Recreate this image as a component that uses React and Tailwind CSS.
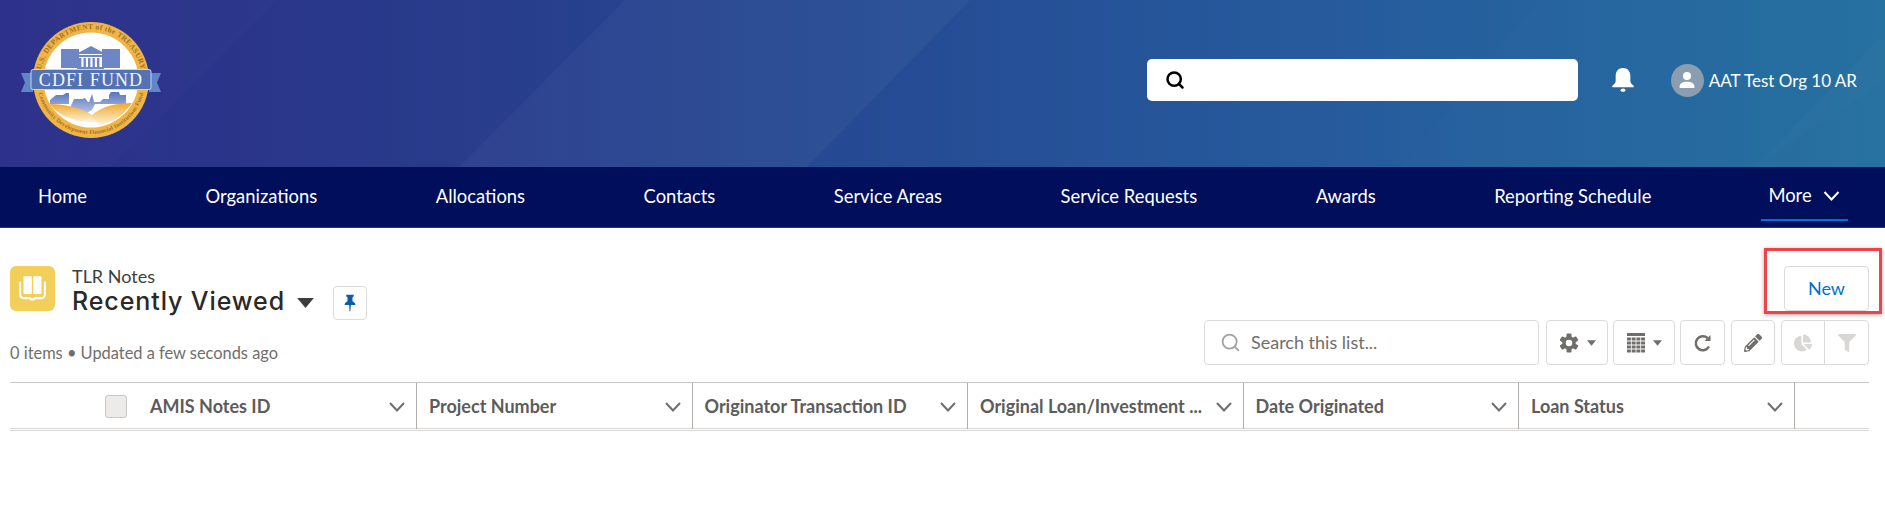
import { Search } from "lucide-react";
import { FaPencilAlt, FaChartPie, FaFilter } from "react-icons/fa";

const navItems = [
  "Home",
  "Organizations",
  "Allocations",
  "Contacts",
  "Service Areas",
  "Service Requests",
  "Awards",
  "Reporting Schedule",
];

const columns = [
  "Project Number",
  "Originator Transaction ID",
  "Original Loan/Investment ...",
  "Date Originated",
  "Loan Status",
];

const Chevron = ({ className }) => (
  <svg viewBox="0 0 16 10" className={className} fill="none" stroke="currentColor" strokeWidth="2">
    <polyline points="1,1 8,8.5 15,1" />
  </svg>
);

const Caret = ({ className }) => (
  <svg viewBox="0 0 10 6" className={className} fill="currentColor">
    <polygon points="0,0 10,0 5,6" />
  </svg>
);

const Logo = () => (
  <svg viewBox="20 21 142 118" className="w-[142px] h-[118px] shrink-0">
    <defs>
      <path id="ringTop" d="M40 80a51 51 0 0 1 102 0" />
      <path id="ringBottom" d="M37 80a54 54 0 0 0 108 0" />
      <linearGradient id="hillL" x1="0" y1="0" x2="0" y2="1">
        <stop offset="0" stopColor="#efa92c" />
        <stop offset="1" stopColor="#fdf4dd" />
      </linearGradient>
      <linearGradient id="city" x1="0" y1="0" x2="0" y2="1">
        <stop offset="0" stopColor="#5a76bb" />
        <stop offset="1" stopColor="#c5d0e8" />
      </linearGradient>
    </defs>
    <circle cx="91" cy="80" r="58" fill="#f0b545" />
    <circle cx="91" cy="80" r="47.5" fill="#ffffff" />
    <text fill="#a0702a" fontSize="7.4" fontWeight="700" fontFamily="'Liberation Serif', serif" letterSpacing="0.35">
      <textPath href="#ringTop" startOffset="50%" textAnchor="middle">U.S. DEPARTMENT of the TREASURY</textPath>
    </text>
    <text fill="#a0702a" fontSize="5.8" fontWeight="700" fontFamily="'Liberation Serif', serif" letterSpacing="0.2">
      <textPath href="#ringBottom" startOffset="50%" textAnchor="middle">Community Development Financial Institutions Fund</textPath>
    </text>
    {/* treasury building */}
    <g fill="#6e87c4">
      <rect x="61" y="49" width="18" height="19" />
      <rect x="102" y="49" width="18" height="19" />
      <polygon points="76,54 91,46 106,54" />
      <rect x="78" y="55" width="25" height="2" />
      <rect x="79" y="58" width="2.4" height="9" />
      <rect x="83.5" y="58" width="2.4" height="9" />
      <rect x="88" y="58" width="2.4" height="9" />
      <rect x="92.5" y="58" width="2.4" height="9" />
      <rect x="97" y="58" width="2.4" height="9" />
      <rect x="77" y="67" width="27" height="2" />
    </g>
    {/* skyline */}
    <path
      d="M50 100l6-5h7l3-2h3v11H50zM70 108l4-9h8l3-1 3 4h1l3-8 2 8h6l3-3h6v-4l2-3h8l1 3h6v9h-31l-3 6-12 7-10-3z"
      fill="url(#city)"
    />
    <path d="M50 104c15 0 32 4 42 11 3 2 5 4 7 7-12 1-30-1-41-10-4-3-6-5-8-8z" fill="url(#hillL)" />
    <path d="M132 103c-15 0-31 3-41 13l9 9c12-2 23-9 32-22z" fill="url(#hillL)" />
    {/* ribbon */}
    <polygon points="21,73 33,73 33,92 21,92 25,82.5" fill="#5f86c9" />
    <polygon points="161,73 149,73 149,92 161,92 157,82.5" fill="#5f86c9" />
    <rect x="31" y="69.5" width="120" height="20" rx="2" fill="#5272b4" stroke="#c6d3ec" strokeWidth="1" />
    <text x="91" y="85.5" textAnchor="middle" fill="#f4f6fb" fontSize="18" fontFamily="'Liberation Serif', serif" letterSpacing="1.1">
      CDFI FUND
    </text>
  </svg>
);

const HeaderBands = () => (
  <svg className="absolute inset-0 w-full h-full" viewBox="0 0 1885 167" preserveAspectRatio="none">
    <polygon points="0,0 277,0 110,167 0,167" fill="#ffffff" fillOpacity="0.012" />
    <polygon points="625,0 970,0 807,167 459,167" fill="#ffffff" fillOpacity="0.035" />
    <polygon points="1540,0 1885,0 1885,80 1755,167 1400,167" fill="#ffffff" fillOpacity="0.012" />
    <polygon points="1878,40 1885,40 1885,167 1755,167" fill="#ffffff" fillOpacity="0.02" />
  </svg>
);

const GearIcon = () => (
  <svg viewBox="0 0 20 20" className="w-[20px] h-[20px]" fill="currentColor">
    {[0, 60, 120, 180, 240, 300].map((deg) => (
      <rect key={deg} x="7.500" y="0.500" width="5" height="5" rx="1" transform={"rotate(" + deg + " 10 10)"} />
    ))}
    <circle cx="10" cy="10" r="5" fill="none" stroke="currentColor" strokeWidth="3.500" />
  </svg>
);

const ToolButton = ({ className = "", children }) => (
  <button className={"h-[45px] flex items-center justify-center gap-[8px] border border-[#dddbda] rounded-[4px] bg-white text-[#706e6b] " + className}>
    {children}
  </button>
);

export default function App() {
  return (
    <div className="w-[1885px] h-[521px] overflow-hidden bg-white font-['Lato','Liberation_Sans',sans-serif]">
      <header className="relative h-[167px] flex bg-[linear-gradient(90deg,#2c2f8a_0%,#29398a_20%,#254a93_45%,#265a9d_70%,#23709f_100%)]">
        <HeaderBands />
        <div className="relative ml-[20px] mt-[21px]">
          <Logo />
        </div>
        <div className="relative ml-auto mt-[59px] h-[42px] pr-[28px] flex items-center text-white">
          <div className="w-[431px] h-[42px] bg-white rounded-[5px] flex items-center pl-[18px]">
            <Search size={20} strokeWidth={3} className="text-black" />
          </div>
          <svg viewBox="0 0 24 24" className="ml-[29px] w-[32px] h-[32px]" fill="currentColor">
            <path d="M12 3c-3.5 0-5.5 2.6-5.5 6v3.5c0 1.6-1 2.6-2.3 3.6-.6.5-.3 1.4.5 1.4h14.6c.8 0 1.1-.9.5-1.4-1.3-1-2.3-2-2.3-3.6V9c0-3.4-2-6-5.5-6z" />
            <ellipse cx="12" cy="19.6" rx="1.8" ry="1.2" />
          </svg>
          <div className="ml-[32px] w-[33px] h-[33px] rounded-full bg-[#8a9db1] flex items-center justify-center">
            <svg viewBox="0 0 24 24" className="w-[24px] h-[24px]" fill="currentColor">
              <circle cx="12" cy="8" r="4" />
              <path d="M4.5 19c0-3.4 3-5.2 7.500-5.200s7.500 1.800 7.500 5.200c0 .7-.5 1-1 1H5.500c-.5 0-1-.3-1-1z" />
            </svg>
          </div>
          <span className="ml-[5px] text-[17px] leading-none whitespace-nowrap">AAT Test Org 10 AR</span>
        </div>
      </header>

      <nav className="h-[61px] bg-[#000e5c] border-b border-[#2b3670] flex items-stretch pl-[38px] text-white text-[18.4px]">
        <div className="flex items-center gap-[118.5px]">
          {navItems.map((item) => (
            <a key={item} className="whitespace-nowrap">{item}</a>
          ))}
        </div>
        <a className="ml-[110px] w-[87px] pt-[6px] mb-[6px] px-[7px] flex items-center gap-[11px] border-b-2 border-[#0070d2]">
          More
          <Chevron className="w-[17px] h-[10px] shrink-0" />
        </a>
      </nav>

      <main className="pl-[10px] pr-[16px] pt-[38px]">
        <div className="flex justify-between">
          <div className="flex flex-col justify-between">
            <div className="flex">
              <div className="w-[45px] h-[45px] rounded-[6px] bg-[#f2cf5b] flex items-center justify-center">
                <svg viewBox="0 0 24 24" className="w-[33px] h-[33px] text-white">
                  <rect x="5.500" y="3" width="6" height="13" rx="0.800" fill="currentColor" />
                  <rect x="12.500" y="3" width="6" height="13" rx="0.800" fill="currentColor" />
                  <path d="M3 7v9.500A2.500 2.500 0 0 0 5.500 19H10l1 1h2l1-1h4.500a2.500 2.500 0 0 0 2.500-2.500V7" fill="none" stroke="currentColor" strokeWidth="1.500" />
                </svg>
              </div>
              <div className="ml-[17px]">
                <div className="h-[20px] leading-[20px] text-[18px] text-[#3e3e3c]">TLR Notes</div>
                <div className="flex items-center h-[34px]">
                  <span className="-mt-[3px] text-[25px] leading-none font-['Inter',sans-serif] font-medium tracking-[0.9px] text-[#2b2826] whitespace-nowrap">
                    Recently Viewed
                  </span>
                  <Caret className="ml-[12px] w-[17px] h-[10px] text-[#3e3e3c]" />
                  <button className="ml-[19px] w-[34px] h-[34px] rounded-[4px] border border-[#dddbda] flex items-center justify-center">
                    <svg viewBox="0 0 24 24" className="w-[20px] h-[20px] text-[#0b5cab]" fill="currentColor">
                      <path d="M7.500 2h9v2l-1.500 1v5c2 1 3.500 2.500 3.500 4.500H13L12.500 22h-1L11 14.500H5.500C5.500 12.500 7 11 9 10V5L7.500 4z" />
                    </svg>
                  </button>
                </div>
              </div>
            </div>
            <div className="h-[24px] leading-[24px] text-[16.4px] text-[#706e6b] whitespace-nowrap">
              0 items • Updated a few seconds ago
            </div>
          </div>

          <div className="flex flex-col items-end gap-[9px]">
            <div className="relative">
              <button className="w-[85px] h-[45px] rounded-[4px] border border-[#dddbda] bg-white text-[18px] text-[#0070d2]">
                New
              </button>
              <div className="absolute -left-[20px] -right-[13px] -top-[18px] -bottom-[3px] border-[3px] border-[#f04347] shadow-[0_1px_4px_rgba(0,0,0,0.35)]" />
            </div>
            <div className="flex">
              <div className="w-[335px] h-[45px] rounded-[4px] border border-[#dddbda] flex items-center pl-[15px]">
                <Search size={21} strokeWidth={2} className="text-[#a3a09d]" />
                <input
                  placeholder="Search this list..."
                  className="ml-[10px] w-[270px] text-[18px] outline-none placeholder:text-[#706e6b]"
                />
              </div>
              <ToolButton className="ml-[7px] w-[62px]">
                <GearIcon />
                <Caret className="w-[9px] h-[6px]" />
              </ToolButton>
              <ToolButton className="ml-[5px] w-[62px]">
                <svg viewBox="0 0 18 20" className="w-[18px] h-[20px]" fill="currentColor">
                  <rect x="0" y="0" width="18" height="3" />
                  {[4.500, 8.500, 12.500, 16.500].map((y) =>
                    [0, 4.700, 9.400, 14.100].map((x) => (
                      <rect key={x + "-" + y} x={x} y={y} width="3.900" height="3" />
                    ))
                  )}
                </svg>
                <Caret className="w-[9px] h-[6px]" />
              </ToolButton>
              <ToolButton className="ml-[5px] w-[45px]">
                <svg viewBox="0 0 20 20" className="w-[20px] h-[20px]" fill="none" stroke="currentColor" strokeWidth="2.500">
                  <path d="M16 13.500A7 7 0 1 1 14.500 5" />
                  <polygon points="17.500,2 17.500,8 11.500,8" fill="currentColor" stroke="none" />
                </svg>
              </ToolButton>
              <ToolButton className="ml-[6px] w-[44px]">
                <FaPencilAlt size={18} />
              </ToolButton>
              <div className="ml-[6px] flex h-[45px] rounded-[4px] border border-[#dddbda] text-[#d8d7d5]">
                <div className="w-[43px] flex items-center justify-center border-r border-[#dddbda]">
                  <FaChartPie size={18} />
                </div>
                <div className="w-[43px] flex items-center justify-center">
                  <FaFilter size={18} />
                </div>
              </div>
            </div>
          </div>
        </div>

        <div className="mt-[17px] h-[49px] flex border-t border-[#c9c7c5] text-[18px] font-bold text-[#5c5c5c]">
          <div className="w-[407px] h-[46px] pt-[1px] flex items-center border-r border-[#b0adab] pl-[95px]">
            <span className="w-[22px] h-[23px] rounded-[3px] border border-[#c9c7c5] bg-[#ecebea] shrink-0" />
            <span className="ml-[23px] flex-1">AMIS Notes ID</span>
            <Chevron className="mr-[11px] w-[16px] h-[10px] text-[#706e6b]" />
          </div>
          {columns.map((col) => (
            <div key={col} className="w-[275.500px] h-[46px] pt-[1px] flex items-center border-r border-[#b0adab] pl-[12px]">
              <span className="flex-1 min-w-0 whitespace-nowrap">{col}</span>
              <Chevron className="ml-[8px] mr-[11px] w-[16px] h-[10px] shrink-0 text-[#706e6b]" />
            </div>
          ))}
        </div>
        <div className="-mt-[3px] h-[3px] border-y border-[#d8d7d5]" />
      </main>
    </div>
  );
}
